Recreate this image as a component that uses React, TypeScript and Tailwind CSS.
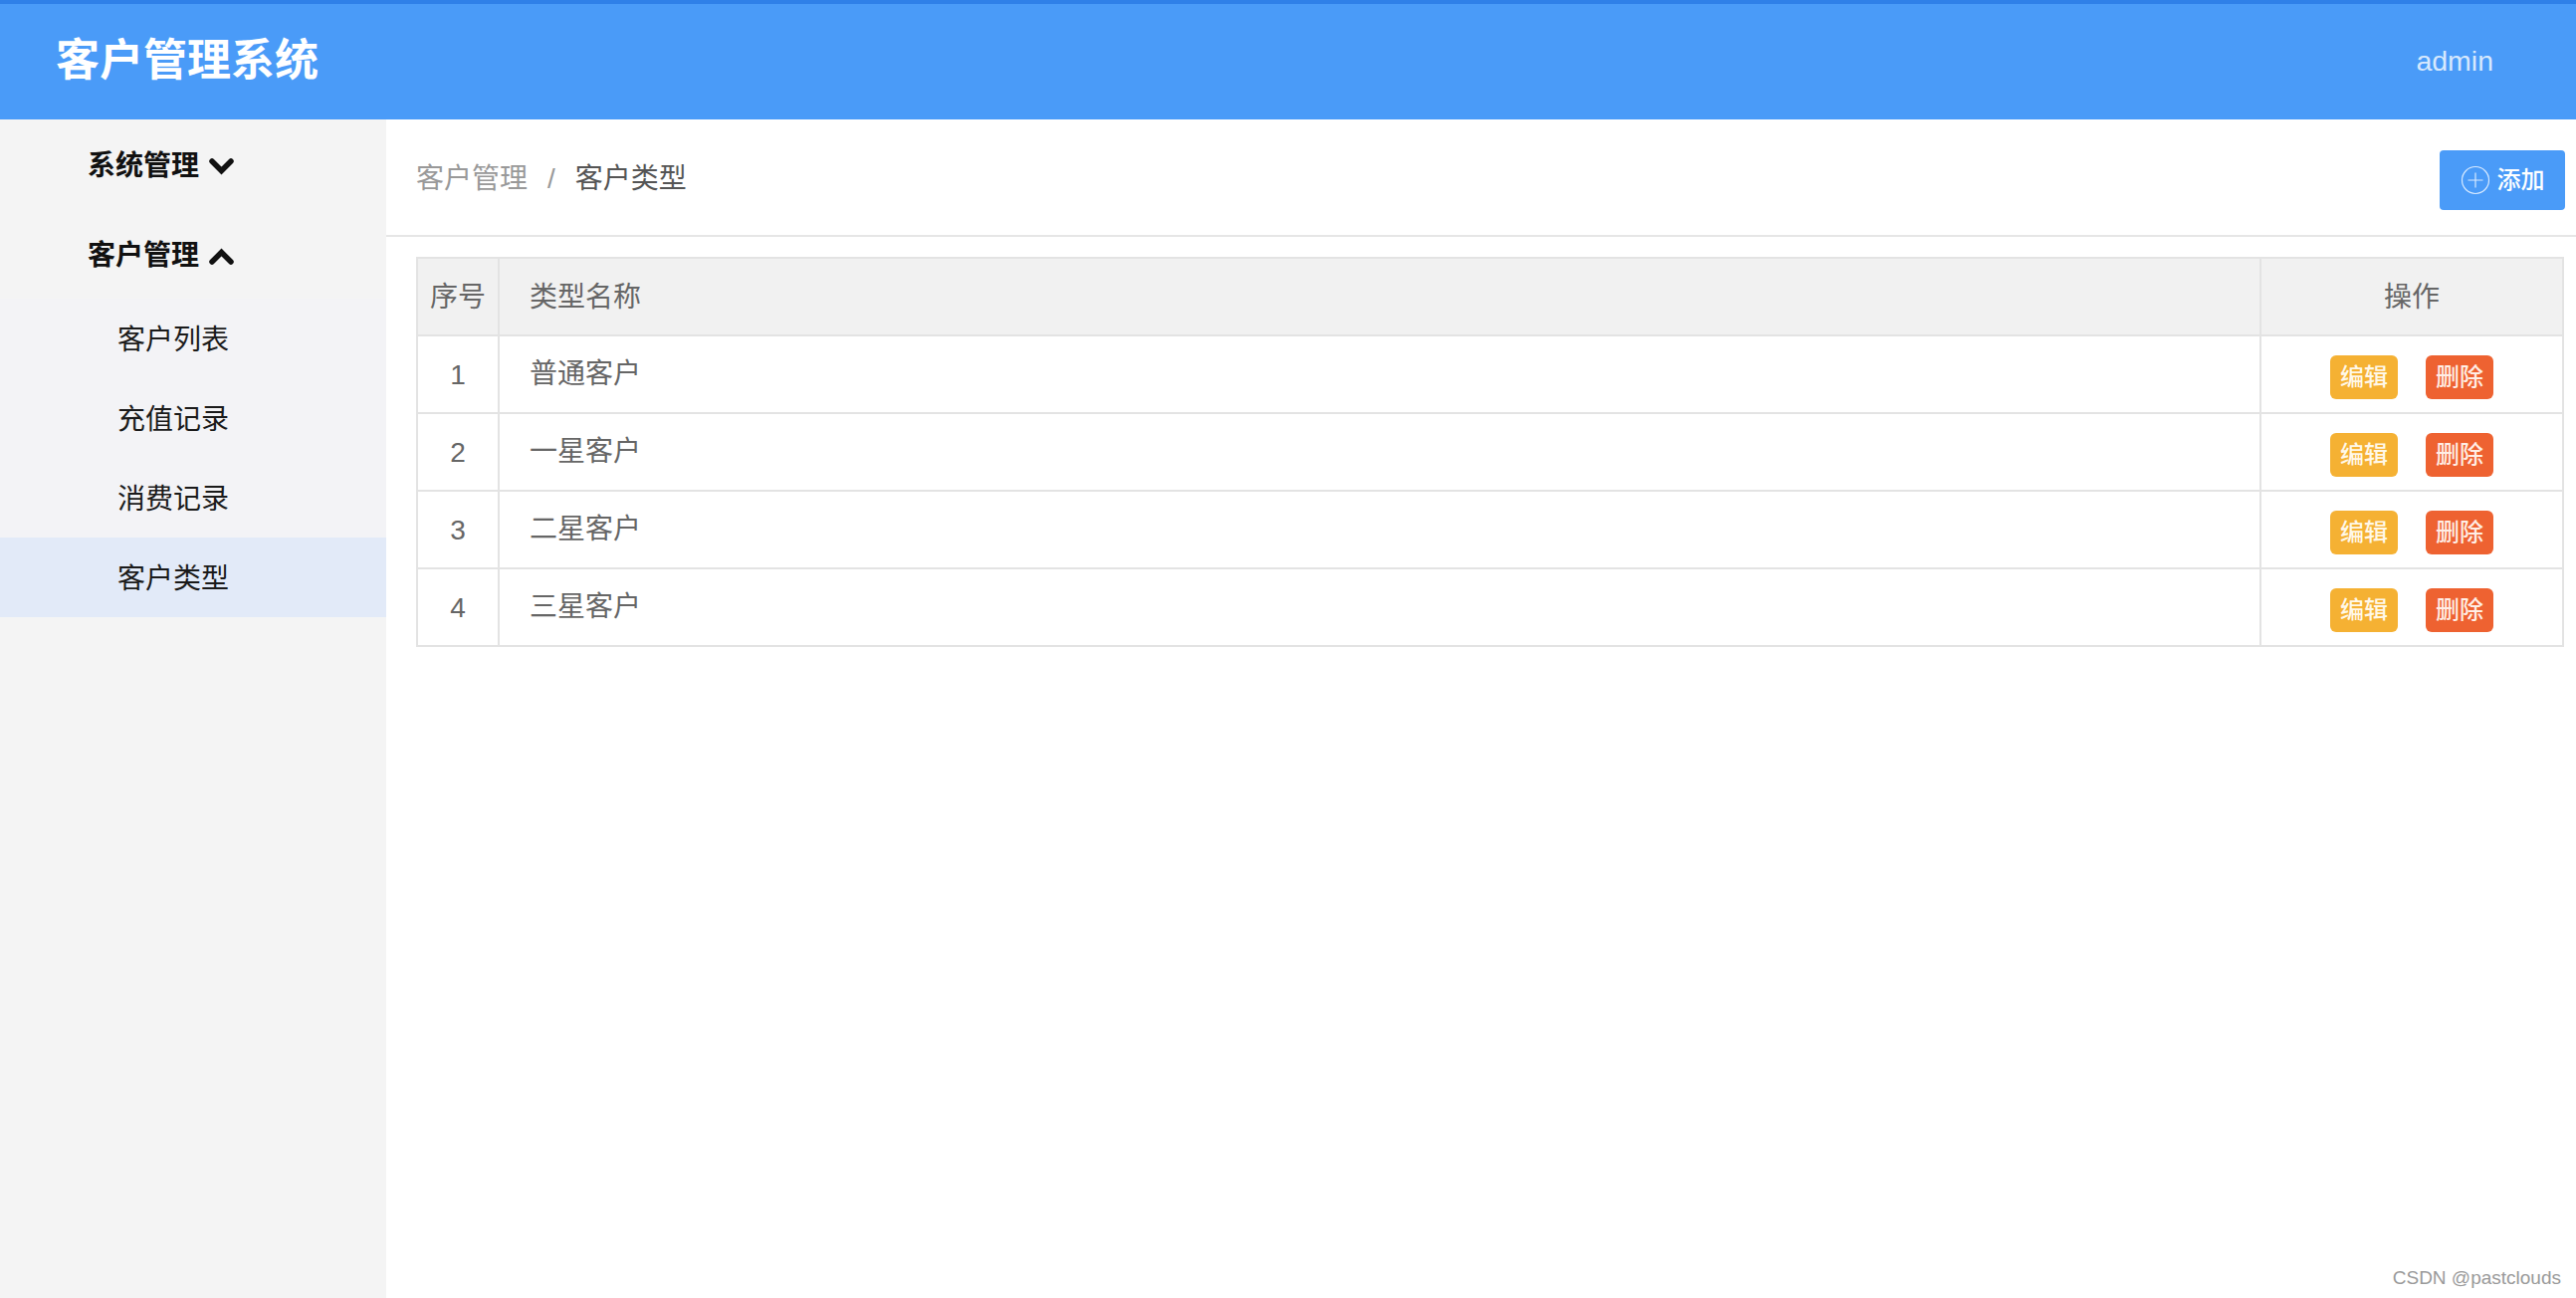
const subMenus = ['客户列表', '充值记录', '消费记录', '客户类型'];
const types = ['普通客户', '一星客户', '二星客户', '三星客户'];

function Chevron({ up = false }: { up?: boolean }) {
  return (
    <svg width="25" height="17" viewBox="0 0 25 17" fill="none" stroke="#111" strokeWidth="5.5" strokeLinecap="round" strokeLinejoin="miter">
      <path d={up ? 'M3 14 L12.5 4.5 L22 14' : 'M3 3 L12.5 12.5 L22 3'} />
    </svg>
  );
}

function PlusCircle() {
  return (
    <svg width="30" height="30" viewBox="0 0 30 30" fill="none" stroke="currentColor" strokeWidth="1.2" className="text-[#d8eaff]">
      <circle cx="15" cy="15" r="13.5" />
      <path d="M15 7.5v15M7.5 15h15" />
    </svg>
  );
}

export default function App() {
  return (
    <div className="relative flex h-[1304px] flex-col overflow-hidden bg-white font-['Liberation_Sans','Noto_Sans_CJK_SC',sans-serif]">
      <header className="flex h-[120px] shrink-0 items-center justify-between border-t-4 border-[#2f80e8] bg-[#4a9bf8] pl-[56px] pr-[83px]">
        <h1 className="mb-[2px] text-[44px] font-bold text-white">客户管理系统</h1>
        <span className="mb-[2px] text-[28.5px] text-[#d6e8fd]">admin</span>
      </header>

      <div className="flex flex-1">
        <aside className="w-[388px] shrink-0 bg-[#f4f4f4]">
          <div className="flex h-[90px] items-center gap-[10px] pt-[4px] pl-[88px] text-[28px] font-bold text-[#111]">
            系统管理
            <Chevron />
          </div>
          <div className="flex h-[90px] items-center gap-[10px] pt-[4px] pl-[88px] text-[28px] font-bold text-[#111]">
            客户管理
            <Chevron up />
          </div>
          <ul>
            {subMenus.map((name) => (
              <li
                key={name}
                className={`flex h-[80px] items-center pl-[118px] pt-[3px] text-[28px] text-[#1a1a1a] ${
                  name === '客户类型' ? 'bg-[#e2eaf8]' : 'bg-[#f3f3f6]'
                }`}
              >
                {name}
              </li>
            ))}
          </ul>
        </aside>

        <main className="flex-1 pr-[11px]">
          <div className="-mr-[11px] flex h-[118px] items-center justify-between border-b-2 border-[#e6e6e6] pl-[30px] pr-[11px]">
            <div className="mt-[4px] text-[28px] text-[#999]">
              客户管理
              <span className="mx-[20px]">/</span>
              <span className="text-[#555]">客户类型</span>
            </div>
            <button className="mt-[6px] flex h-[60px] w-[126px] items-center justify-center gap-[7px] rounded-[4px] bg-[#4a9bf8] text-[24px] font-medium text-white">
              <PlusCircle />
              添加
            </button>
          </div>

          <div className="ml-[30px] mt-[20px] w-[2158px]">
            <table className="w-full table-fixed border-collapse text-[28px] text-[#666]">
              <colgroup>
                <col className="w-[82px]" />
                <col />
                <col className="w-[304px]" />
              </colgroup>
              <thead>
                <tr className="h-[78px] bg-[#f1f1f1]">
                  <th className="border-2 border-[#e3e3e3] pt-[2px] font-normal">序号</th>
                  <th className="border-2 border-[#e3e3e3] pl-[30px] pt-[2px] text-left font-normal">类型名称</th>
                  <th className="border-2 border-[#e3e3e3] pt-[2px] font-normal">操作</th>
                </tr>
              </thead>
              <tbody>
                {types.map((name, i) => (
                  <tr key={name} className="h-[78px]">
                    <td className="border-2 border-[#e3e3e3] pt-[2px] text-center">{i + 1}</td>
                    <td className="border-2 border-[#e3e3e3] pl-[30px]">{name}</td>
                    <td className="border-2 border-[#e3e3e3]">
                      <div className="mt-[5px] flex justify-center gap-[28px]">
                        <button className="h-[44px] w-[68px] rounded-[6px] bg-[#f5b133] text-[24px] font-medium text-[#fff8e8]">编辑</button>
                        <button className="h-[44px] w-[68px] rounded-[6px] bg-[#ee6231] text-[24px] font-medium text-[#ffeee6]">删除</button>
                      </div>
                    </td>
                  </tr>
                ))}
              </tbody>
            </table>
          </div>
        </main>
      </div>

      <span className="absolute bottom-[6px] right-[15px] text-[19px] text-[#9a9a9a]">CSDN @pastclouds</span>
    </div>
  );
}
